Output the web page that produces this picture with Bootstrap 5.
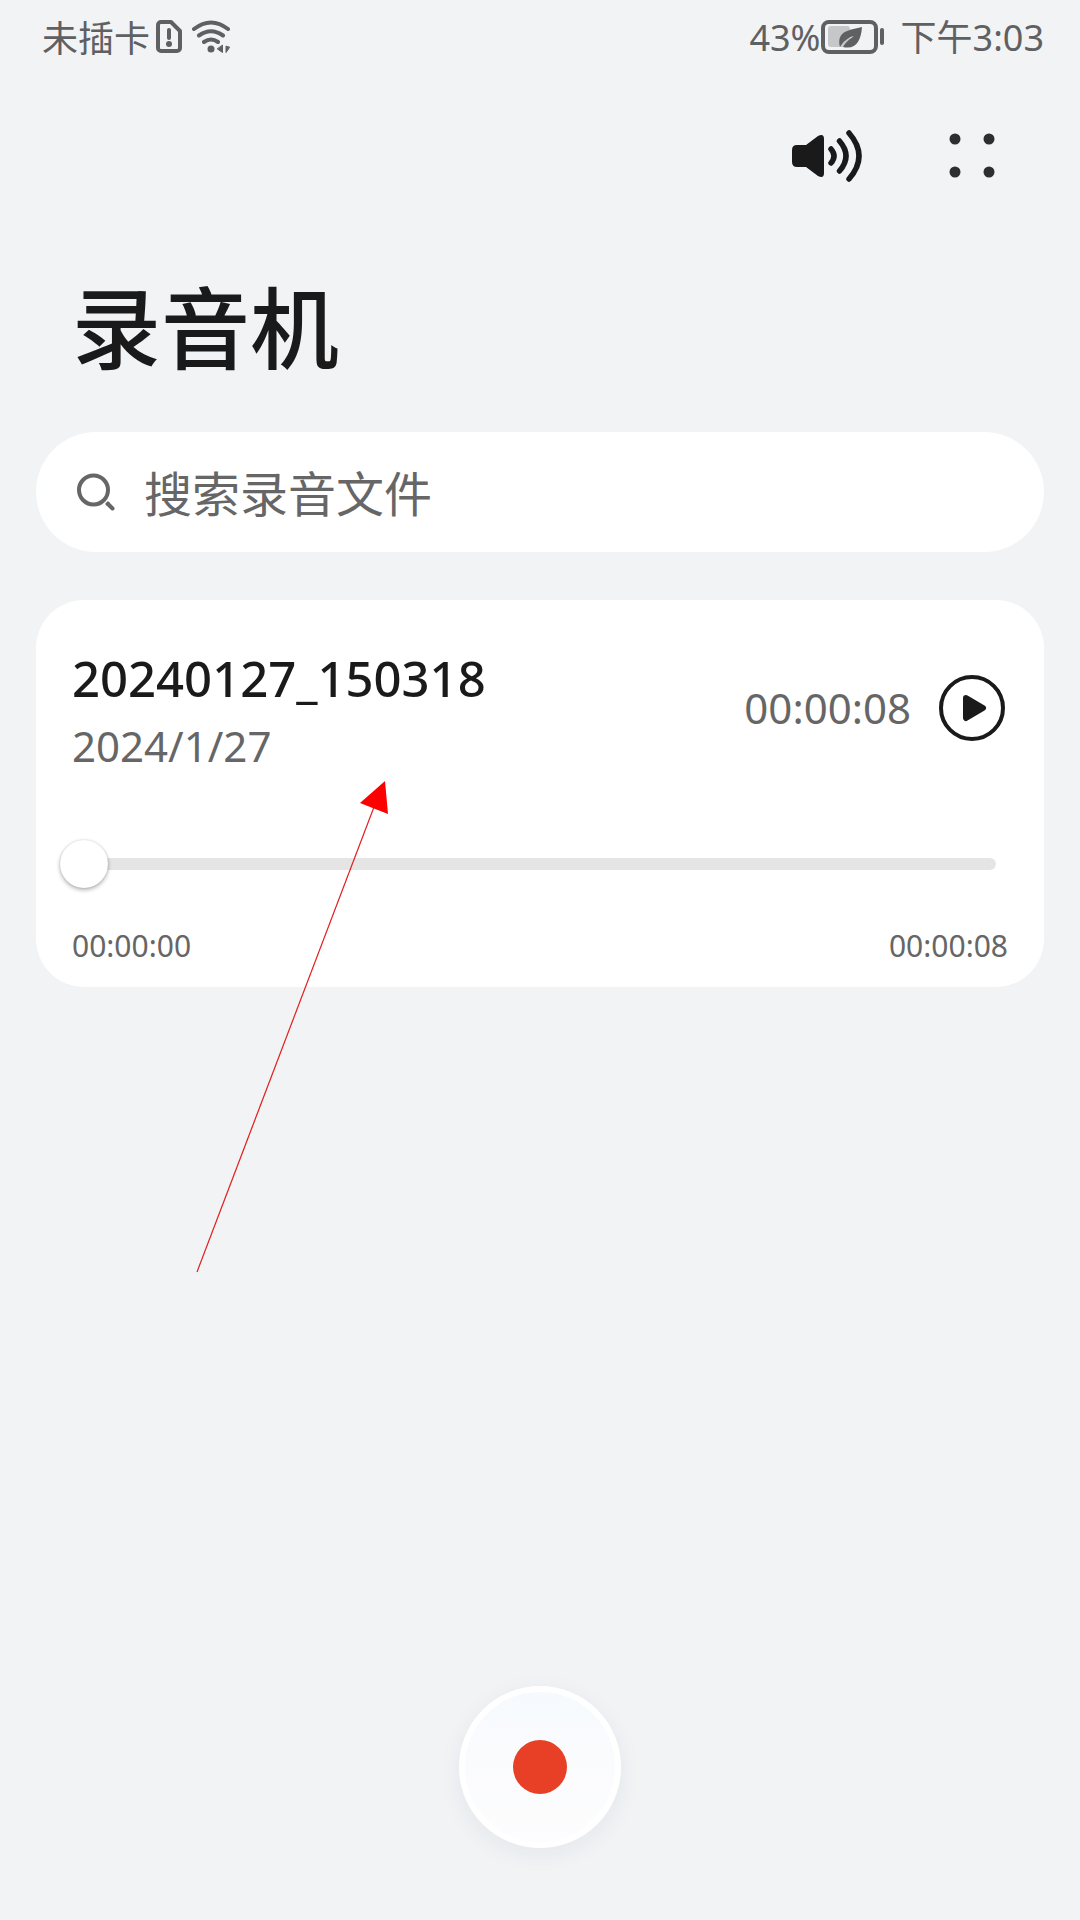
<!DOCTYPE html>
<html lang="zh-CN">
<head>
<meta charset="utf-8">
<meta name="viewport" content="width=device-width, initial-scale=1">
<title>录音机</title>
<link href="https://cdn.jsdelivr.net/npm/bootstrap@5.3.0/dist/css/bootstrap.min.css" rel="stylesheet">
<style>
  :root { --ink: #1a1a1a; --soft: #666; --page: #f1f3f5; }
  body { background: var(--page); color: var(--ink); font-family: "Noto Sans", "Noto Sans CJK SC", sans-serif; }
  svg { display: block; flex: none; }
  .status-bar { height: 72px; padding: 0 36px 0 42px; font-size: 36px; line-height: 48px; color: #5f6062; }
  .status-bar .cjk, .app-title, .search-box input { font-family: "Noto Sans CJK SC", sans-serif; }
  .toolbar { height: 168px; padding-right: 72px; gap: 60px; }
  .icon-btn { padding: 0; border: 0; background: none; color: var(--ink); }
  .app-title { margin: 0; padding: 18px 72px 30px; font-size: 89px; font-weight: 500; line-height: 132px; }
  .content { padding: 12px 36px 0; gap: 48px; }
  .search-box { height: 120px; padding: 0 40px; gap: 24px; background: #fff; color: var(--soft); }
  .search-box input { min-width: 0; padding: 0 0 2px; border: 0; outline: 0; background: none; font-size: 48px; line-height: 72px; color: var(--ink); }
  .search-box input::placeholder { color: var(--soft); opacity: 1; }
  .record-card { border: 0; border-radius: 48px; padding: 40px 36px 19px; }
  .record-name { margin: 0; font-size: 49px; font-weight: 500; line-height: 76px; }
  .record-date, .record-length { font-size: 42px; line-height: 60px; color: var(--soft); }
  .record-side { gap: 28px; padding-right: 3px; }
  .seek { display: block; height: 48px; margin: 64px 12px 36px -12px; background: none; appearance: none; -webkit-appearance: none; }
  .seek::-webkit-slider-runnable-track { height: 12px; border-radius: 6px; background: linear-gradient(to right, transparent 24px, #e5e5e5 24px); }
  .seek::-webkit-slider-thumb { -webkit-appearance: none; width: 48px; height: 48px; margin-top: -18px; border-radius: 50%; background: #fff; box-shadow: 0 2px 4px rgba(0,0,0,.3), 0 0 2px rgba(0,0,0,.15); }
  .seek::-moz-range-track { height: 12px; border-radius: 6px; background: #e5e5e5; }
  .seek-times { font-size: 30px; line-height: 44px; color: var(--soft); }
  .record-dock { padding-bottom: 72px; }
  .record-btn { width: 162px; height: 162px; border: 6px solid #fff; background: linear-gradient(#f6fafe, #fafbfd 40%, #fdfdfe); box-shadow: 0 6px 24px rgba(40,50,80,.06); }
  .record-dot { width: 54px; height: 54px; background: #e84026; }
  .pointer-arrow { left: 190px; top: 775px; pointer-events: none; }
</style>
<script src="https://cdn.jsdelivr.net/npm/bootstrap@5.3.0/dist/js/bootstrap.bundle.min.js" defer></script>
</head>
<body>
<div class="position-relative min-vh-100 d-flex flex-column">
  <div class="status-bar d-flex justify-content-between align-items-center">
    <div class="d-flex align-items-center">
      <span class="cjk">未插卡</span>
      <svg class="ms-1" width="32" height="36" viewBox="0 0 32 36" fill="none" stroke="currentColor" stroke-width="4" aria-hidden="true">
        <path d="M7 4h10l9 9v17a3 3 0 0 1-3 3H7a3 3 0 0 1-3-3V7a3 3 0 0 1 3-3Z" stroke-linejoin="round"/>
        <path d="M15 12v8" stroke-linecap="round"/><circle cx="15" cy="26" r="3" fill="currentColor" stroke="none"/>
      </svg>
      <svg class="ms-1" width="42" height="36" viewBox="0 0 42 36" fill="none" stroke="currentColor" stroke-width="4" stroke-linecap="round" aria-hidden="true">
        <path d="M4 11Q21-2 38 11M9 17.500q12-8.500 24 0M14 24q7-5 14 0"/>
        <circle cx="21" cy="31" r="3.500" fill="currentColor" stroke="none"/>
        <path d="M32.500 27.500v7l-5-3.500ZM36 28.500v6l3.500-5Z" fill="currentColor" stroke="currentColor" stroke-width="1"/>
      </svg>
    </div>
    <div class="d-flex align-items-center">
      <span class="pt-1">43%</span>
      <svg width="64" height="36" viewBox="0 0 64 36" fill="none" aria-hidden="true">
        <rect x="2" y="4" width="53" height="30" rx="6" stroke="currentColor" stroke-width="4"/>
        <rect x="7" y="8" width="22" height="21" rx="3" fill="#c6c7c9"/>
        <path d="M19 29c-4-17 11-17 22-20-1 14-6 23-19 20 2-4 6-8 11-11-7 2-11 6-14 11Z" fill="currentColor"/>
        <rect x="59" y="10" width="4" height="17" rx="2" fill="currentColor"/>
      </svg>
      <span class="ms-3"><span class="cjk">下午</span>3:03</span>
    </div>
  </div>

  <div class="toolbar d-flex justify-content-end align-items-center">
    <button class="icon-btn" type="button" aria-label="扬声器">
      <svg width="72" height="60" viewBox="0 0 72 60">
        <path d="M5 19h9L26 10q6-3 6 3v34q0 6-6 3L14 41H5q-5 0-5-5V24q0-5 5-5Z" fill="currentColor"/>
        <path d="M39 23q6 7 0 14M47.500 15q13 15 0 30M57 7q20 23 0 46" fill="none" stroke="currentColor" stroke-width="5.500" stroke-linecap="round"/>
      </svg>
    </button>
    <button class="icon-btn" type="button" aria-label="更多">
      <svg width="84" height="60" viewBox="0 0 84 60" fill="#2e2e2e">
        <circle cx="31" cy="13" r="5.500"/><circle cx="65" cy="13" r="5.500"/><circle cx="31" cy="46" r="5.500"/><circle cx="65" cy="46" r="5.500"/>
      </svg>
    </button>
  </div>

  <h1 class="app-title">录音机</h1>

  <main class="content d-flex flex-column">
    <label class="search-box rounded-pill d-flex align-items-center">
      <svg width="44" height="44" viewBox="0 0 44 44" fill="none" stroke="currentColor" stroke-width="4" aria-hidden="true">
        <circle cx="17.500" cy="20" r="14.500"/><path d="M30.500 32.500l2 2"/><path d="M32 34l4.500 4.500" stroke-linecap="round"/>
      </svg>
      <input class="flex-grow-1" type="search" placeholder="搜索录音文件" aria-label="搜索录音文件">
    </label>

    <article class="record-card card">
      <div class="d-flex justify-content-between align-items-center">
        <div>
          <h2 class="record-name">20240127_150318</h2>
          <div class="record-date">2024/1/27</div>
        </div>
        <div class="record-side d-flex align-items-center">
          <span class="record-length">00:00:08</span>
          <button class="icon-btn" type="button" aria-label="播放">
            <svg width="66" height="66" viewBox="0 0 66 66">
              <circle cx="33" cy="33" r="31" fill="none" stroke="currentColor" stroke-width="4"/>
              <path d="M27 23l17 10-17 10Z" fill="currentColor" stroke="currentColor" stroke-width="6" stroke-linejoin="round"/>
            </svg>
          </button>
        </div>
      </div>
      <input class="seek" type="range" min="0" max="8" value="0" aria-label="播放进度">
      <div class="seek-times d-flex justify-content-between">
        <span>00:00:00</span><span>00:00:08</span>
      </div>
    </article>
  </main>

  <div class="record-dock d-flex justify-content-center mt-auto">
    <button class="record-btn rounded-circle d-flex justify-content-center align-items-center p-0" type="button" aria-label="开始录音">
      <span class="record-dot rounded-circle"></span>
    </button>
  </div>

  <svg class="pointer-arrow position-absolute" width="204" height="504" viewBox="0 0 204 504" aria-hidden="true">
    <path d="M7 497L184 32" stroke="#e02020" stroke-width="1.200"/>
    <path d="M195 6L170 28 198 39Z" fill="#f00"/>
  </svg>
</div>
</body>
</html>
